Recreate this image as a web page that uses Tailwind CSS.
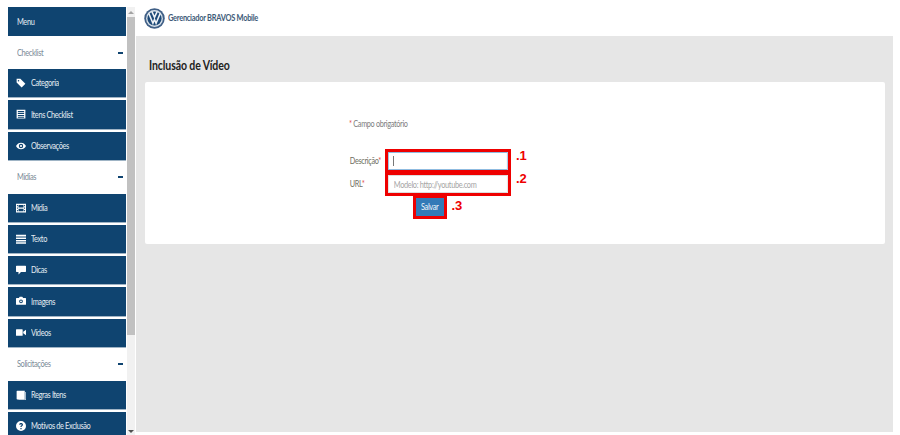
<!DOCTYPE html>
<html lang="pt-BR">
<head>
  <meta charset="UTF-8">
  <title>Gerenciador BRAVOS Mobile</title>
  <script src="https://cdn.jsdelivr.net/npm/@tailwindcss/browser@4"></script>
</head>
<body class="bg-white font-['Lato',sans-serif]">
  <div class="flex h-[435px] w-[900px] overflow-hidden">

    <!-- Sidebar -->
    <aside class="flex w-[136px] shrink-0 pt-[7px]">
      <nav class="w-[127px] pl-2 pr-px text-[9px] tracking-[-0.45px] text-[#e4ecf2]">
        <div class="flex h-[29.25px] items-center bg-[#0f4470] pl-[9px]"><span class="origin-left scale-x-[0.82]">Menu</span></div>

        <div class="flex h-[32.75px] items-center justify-between pl-[9px] pr-[3px] text-[#7b8a97]"><span class="origin-left scale-x-[0.82]">Checklist</span><span class="h-[2px] w-[5px] bg-[#0f4470]"></span></div>
        <a class="mb-[2px] flex h-[29.25px] items-center gap-[5px] border-b border-[#9fb4c5] bg-[#0f4470] pl-[8px]">
          <svg class="h-[10px] w-[10px] shrink-0 fill-white" viewBox="0 0 16 16"><path d="M1 1h6l8 8-6 6-8-8zM4 3a1.2 1.2 0 1 0 0 2.400a1.200 1.200 0 0 0 0-2.400z"/></svg>
          <span class="origin-left scale-x-[0.82]">Categoria</span></a>
        <a class="mb-[2px] flex h-[29.25px] items-center gap-[5px] border-b border-[#9fb4c5] bg-[#0f4470] pl-[8px]">
          <svg class="h-[10px] w-[10px] shrink-0 fill-white" viewBox="0 0 16 16"><path fill-rule="evenodd" d="M1 1h14v14H1zM3 3v2h10V3zm0 3.500v1.500h10V6.500zm0 3v1.500h10V9.500zm0 3V14h10v-1.500z"/></svg>
          <span class="origin-left scale-x-[0.82]">Itens Checklist</span></a>
        <a class="flex h-[29.25px] items-center gap-[5px] border-b border-[#9fb4c5] bg-[#0f4470] pl-[8px]">
          <svg class="h-[10px] w-[10px] shrink-0 fill-white" viewBox="0 0 18 14"><path fill-rule="evenodd" d="M0 7c2-4 5.500-6 9-6s7 2 9 6c-2 4-5.500 6-9 6s-7-2-9-6zm9-4a4 4 0 1 0 0 8 4 4 0 0 0 0-8zm0 2a2 2 0 1 1 0 4 2 2 0 0 1 0-4z"/></svg>
          <span class="origin-left scale-x-[0.82]">Observações</span></a>

        <div class="flex h-[32.75px] items-center justify-between pl-[9px] pr-[3px] text-[#7b8a97]"><span class="origin-left scale-x-[0.82]">Mídias</span><span class="h-[2px] w-[5px] bg-[#0f4470]"></span></div>
        <a class="mb-[2px] flex h-[29.25px] items-center gap-[5px] border-b border-[#9fb4c5] bg-[#0f4470] pl-[8px]">
          <svg class="h-[10px] w-[10px] shrink-0 fill-white" viewBox="0 0 16 16"><path fill-rule="evenodd" d="M0 1h16v14H0zM4 3v4h8V3zm0 6v4h8V9zM1.500 3v2H3V3zm0 4v2H3V7zm0 4v2H3v-2zM13 3v2h1.500V3zm0 4v2h1.500V7zm0 4v2h1.500v-2z"/></svg>
          <span class="origin-left scale-x-[0.82]">Mídia</span></a>
        <a class="mb-[2px] flex h-[29.25px] items-center gap-[5px] border-b border-[#9fb4c5] bg-[#0f4470] pl-[8px]">
          <svg class="h-[10px] w-[10px] shrink-0 fill-white" viewBox="0 0 16 16"><path d="M0 1h16v3H0zM0 5.500h16v2.500H0zM0 9.500h16V12H0zM0 13h16v2.500H0z"/></svg>
          <span class="origin-left scale-x-[0.82]">Texto</span></a>
        <a class="mb-[2px] flex h-[29.25px] items-center gap-[5px] border-b border-[#9fb4c5] bg-[#0f4470] pl-[8px]">
          <svg class="h-[10px] w-[10px] shrink-0 fill-white" viewBox="0 0 16 16"><path d="M1 1h14a1 1 0 0 1 1 1v8a1 1 0 0 1-1 1H8l-4 4v-4H1a1 1 0 0 1-1-1V2a1 1 0 0 1 1-1z"/></svg>
          <span class="origin-left scale-x-[0.82]">Dicas</span></a>
        <a class="mb-[2px] flex h-[29.25px] items-center gap-[5px] border-b border-[#9fb4c5] bg-[#0f4470] pl-[8px]">
          <svg class="h-[10px] w-[10px] shrink-0 fill-white" viewBox="0 0 16 16"><path fill-rule="evenodd" d="M1 3h3.500L6 1h4l1.500 2H15a1 1 0 0 1 1 1v9a1 1 0 0 1-1 1H1a1 1 0 0 1-1-1V4a1 1 0 0 1 1-1zm7 2.500a3 3 0 1 0 0 6 3 3 0 0 0 0-6zm0 1.500a1.500 1.500 0 1 1 0 3 1.500 1.500 0 0 1 0-3z"/></svg>
          <span class="origin-left scale-x-[0.82]">Imagens</span></a>
        <a class="flex h-[29.25px] items-center gap-[5px] border-b border-[#9fb4c5] bg-[#0f4470] pl-[8px]">
          <svg class="h-[9px] w-[10px] shrink-0 fill-white" viewBox="0 0 18 14"><path d="M1 1h10a1 1 0 0 1 1 1v10a1 1 0 0 1-1 1H1a1 1 0 0 1-1-1V2a1 1 0 0 1 1-1zM13 5.500 18 2v10l-5-3.500z"/></svg>
          <span class="origin-left scale-x-[0.82]">Vídeos</span></a>

        <div class="flex h-[32.75px] items-center justify-between pl-[9px] pr-[3px] text-[#7b8a97]"><span class="origin-left scale-x-[0.82]">Solicitações</span><span class="h-[2px] w-[5px] bg-[#0f4470]"></span></div>
        <a class="mb-[2px] flex h-[29.25px] items-center gap-[5px] border-b border-[#9fb4c5] bg-[#0f4470] pl-[8px]">
          <svg class="h-[10px] w-[10px] shrink-0 fill-white" viewBox="0 0 16 16"><path d="M2 1h12v14H2a1 1 0 0 1-1-1V2a1 1 0 0 1 1-1zM15 3h1v13H4v-.500h11z"/></svg>
          <span class="origin-left scale-x-[0.82]">Regras Itens</span></a>
        <a class="flex h-[29.25px] items-center gap-[5px] border-b border-[#9fb4c5] bg-[#0f4470] pl-[8px]">
          <svg class="h-[10px] w-[10px] shrink-0 fill-white" viewBox="0 0 16 16"><path fill-rule="evenodd" d="M8 0a8 8 0 1 1 0 16A8 8 0 0 1 8 0zM7 11v2h2v-2zM8 3C6.300 3 5 4 4.800 5.700l2 .3c.1-.7.500-1 1.200-1s1.100.3 1.100.9c0 .5-.3.8-1 1.300-.8.6-1.100 1.200-1.100 2.300h2c0-.6.200-.9.900-1.400.9-.7 1.300-1.300 1.300-2.300C11.200 4 9.900 3 8 3z"/></svg>
          <span class="origin-left scale-x-[0.82] whitespace-nowrap">Motivos de Exclusão</span></a>
      </nav>

      <!-- Scrollbar -->
      <div class="flex h-[428px] w-[8px] flex-col items-center bg-[#f1f1f1]">
        <div class="flex h-[10px] items-center"><span class="border-x-[3px] border-b-[3px] border-x-transparent border-b-[#a3a3a3]"></span></div>
        <div class="h-[318px] w-full bg-[#c1c1c1]"></div>
        <div class="flex flex-1 items-end pb-[2px]"><span class="border-x-[3px] border-t-[3px] border-x-transparent border-t-[#505050]"></span></div>
      </div>
    </aside>

    <!-- Main -->
    <div class="w-[757px] shrink-0">
      <header class="flex h-[36px] items-center gap-[3px] py-[5px] pl-[8px]">
        <svg class="h-[21px] w-[21px] shrink-0" viewBox="0 0 40 40">
          <circle cx="20" cy="20" r="19.500" fill="#3f5f86"/>
          <circle cx="20" cy="20" r="16" fill="#d9e2ea"/>
          <circle cx="20" cy="20" r="13.500" fill="#1e4a78"/>
          <path d="M9 10 17 29 20 22 23 29 31 10M15 7 20 18 25 7" fill="none" stroke="#eef2f6" stroke-width="3"/>
        </svg>
        <span class="origin-left scale-x-[0.825] whitespace-nowrap text-[9px] font-bold tracking-[-0.32px] text-[#3d5b78]">Gerenciador BRAVOS Mobile</span>
      </header>

      <main class="h-[396px] bg-[#e6e6e6] pl-[9px] pr-[8px] pt-[22px]">
        <h1 class="ml-[4px] h-[24px] origin-left scale-x-[0.81] text-[13px] font-bold leading-[14px] tracking-[-0.12px] text-[#222]">Inclusão de Vídeo</h1>

        <section class="h-[162px] rounded-[2px] bg-white pl-[204px] pt-[36px] text-[9px] tracking-[-0.4px] text-[#7d7d7d]">
          <p class="h-[12px] origin-left scale-x-[0.81] leading-[12px]"><span class="text-[#e04848]">*</span> Campo obrigatório</p>

          <div class="mt-[19px] flex h-[23px] items-center">
            <label class="w-[36px] shrink-0 origin-left scale-x-[0.81] whitespace-nowrap pl-[1px] text-[#6f6f5f]">Descrição<span class="text-[#e04848]">*</span></label>
            <div class="relative box-border h-[24px] w-[126px] overflow-hidden border-[3px] border-[#ee0000] bg-white">
              <input class="h-full w-[146px] origin-left scale-x-[0.82] border border-[#8fbbe0] pl-[6px] outline-none" aria-label="Descrição">
              <span class="absolute left-[5px] top-[4px] h-[10px] w-px bg-[#777]"></span>
            </div>
            <span class="ml-[5px] pb-[10px] font-['Liberation_Sans',sans-serif] text-[13px] font-bold tracking-normal text-[#ee0000]">.1</span>
          </div>

          <div class="flex h-[24px] items-center">
            <label class="w-[36px] shrink-0 origin-left scale-x-[0.81] pl-[1px] text-[#6f6f5f]">URL<span class="text-[#e04848]">*</span></label>
            <div class="box-border h-[24px] w-[126px] overflow-hidden border-[3px] border-[#ee0000] bg-white">
              <input class="h-full w-[146px] origin-left scale-x-[0.82] border border-[#dddddd] pl-[6px] outline-none placeholder:text-[#a5a5a5]" placeholder="Modelo: http://youtube.com">
            </div>
            <span class="ml-[5px] pb-[10px] font-['Liberation_Sans',sans-serif] text-[13px] font-bold tracking-normal text-[#ee0000]">.2</span>
          </div>

          <div class="-mt-px ml-[63.500px] flex h-[24px] items-center">
            <button class="box-border h-[24px] w-[34px] border-[3px] border-[#ee0000] bg-[#337ab7] text-[#eef4f9]"><span class="inline-block scale-x-[0.82]">Salvar</span></button>
            <span class="ml-[5px] pb-[2px] font-['Liberation_Sans',sans-serif] text-[13px] font-bold tracking-normal text-[#ee0000]">.3</span>
          </div>
        </section>
      </main>
    </div>
  </div>
</body>
</html>
